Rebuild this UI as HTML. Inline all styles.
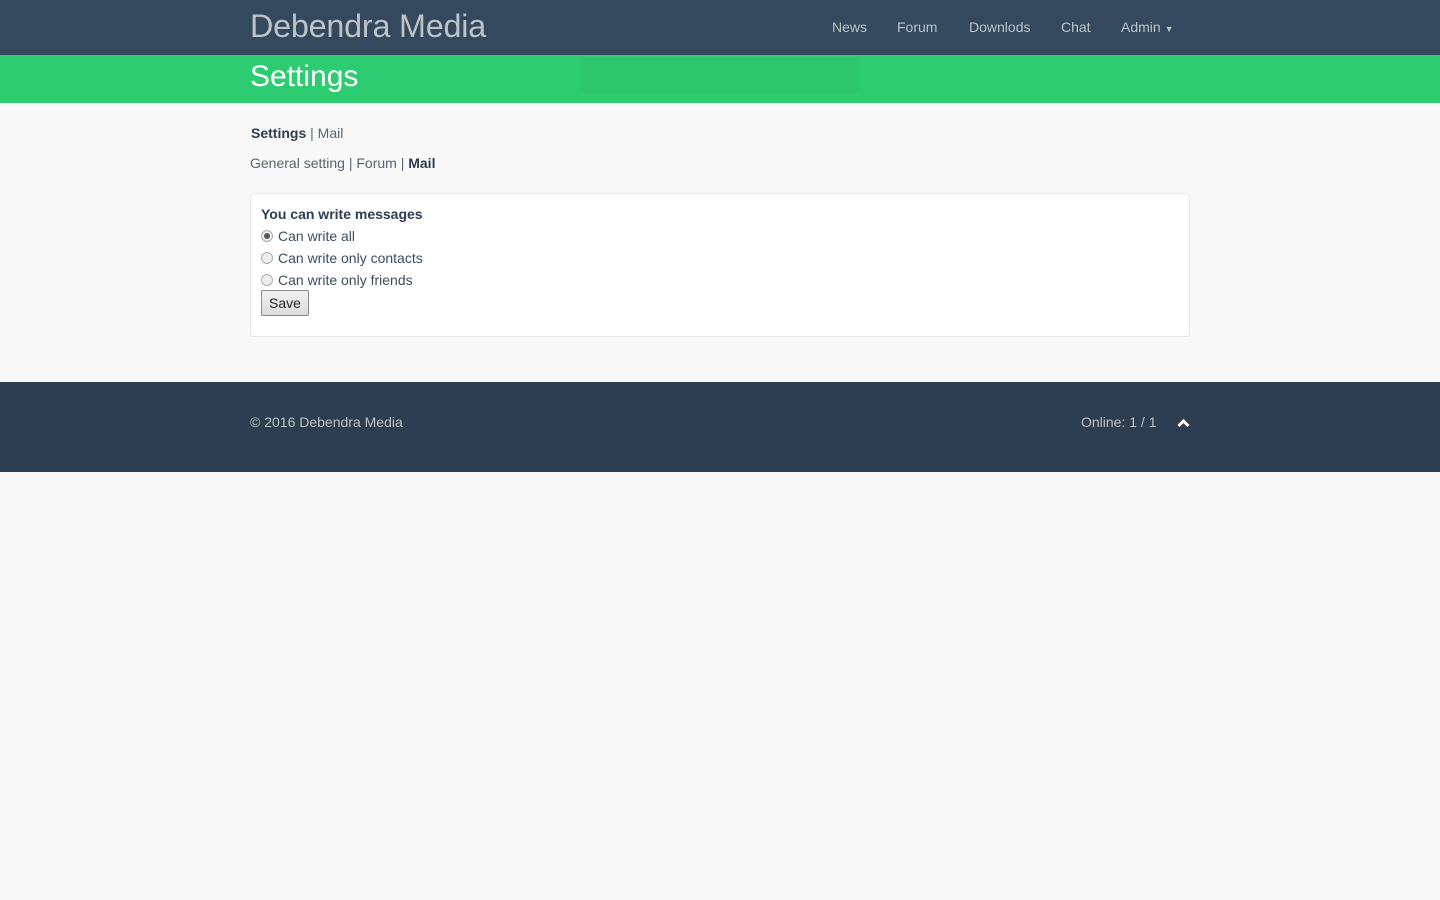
<!DOCTYPE html>
<html><head><style>
*{margin:0;padding:0;box-sizing:border-box}
body{width:1440px;height:900px;background:#f8f8f8;font-family:"Liberation Sans",Arial,sans-serif;color:#2c3e50;font-size:14px;position:relative;overflow:hidden}
.nav{position:absolute;top:0;left:0;width:1440px;height:55px;background:#34495e}
.brand{position:absolute;left:250px;top:8px;font-size:32.3px;color:#bdc3c7;letter-spacing:-0.2px}
.nav a{position:absolute;top:19px;font-size:14px;color:#bdc3c7}
.green{position:absolute;top:55px;left:0;width:1440px;height:48px;background:#2ecc71}
.green h1{position:absolute;left:250px;top:5px;font-size:30px;font-weight:normal;color:#fff}
.ghost{position:absolute;left:580px;top:57px;width:280px;height:36px;background:#2dc86e}
.t{position:absolute;left:250px;font-size:14px}
.t span{color:#566573}
.box{position:absolute;left:250px;top:193px;width:940px;height:144px;background:#fff;border:1px solid #e8e8e8;border-radius:4px}
.r{position:absolute;left:10px;font-size:14px;color:#3c4d5e}
.rad{display:inline-block;width:12px;height:12px;border:1px solid #aaa;border-radius:50%;background:#eee;vertical-align:-1px;margin-right:5px;position:relative}
.rad.on::after{content:"";position:absolute;left:2px;top:2px;width:6px;height:6px;border-radius:50%;background:#555}
.btn{position:absolute;left:10px;top:96px;width:48px;height:26px;border:1px solid #8a8a8a;border-radius:2px;background:linear-gradient(#f2f2f2,#dcdcdc);font-size:14px;text-align:center;line-height:24px;color:#222}
.foot{position:absolute;top:382px;left:0;width:1440px;height:90px;background:#2c3e50;color:#bdc3c7;font-size:14px}
</style></head><body>
<div class="nav">
<div class="brand">Debendra Media</div>
<a style="left:832px">News</a><a style="left:897px">Forum</a><a style="left:969px">Downlods</a><a style="left:1061px">Chat</a><a style="left:1121px">Admin <span style="font-size:9px">▼</span></a>
</div>
<div class="green"><h1>Settings</h1></div>
<div class="ghost"></div>
<div class="t" style="top:125px;left:251px"><b>Settings</b> <span>| Mail</span></div>
<div class="t" style="top:155px"><span>General setting | Forum |</span> <b>Mail</b></div>
<div class="box">
<div class="r" style="top:12px;font-weight:bold;color:#2c3e50">You can write messages</div>
<div class="r" style="top:34px"><span class="rad on"></span>Can write all</div>
<div class="r" style="top:56px"><span class="rad"></span>Can write only contacts</div>
<div class="r" style="top:78px"><span class="rad"></span>Can write only friends</div>
<div class="btn">Save</div>
</div>
<div class="foot">
<div style="position:absolute;left:250px;top:32px">© 2016 Debendra Media</div>
<div style="position:absolute;left:1081px;top:32px">Online: 1 / 1</div>
<svg style="position:absolute;left:1177px;top:36px" width="13" height="10" viewBox="0 0 13 10"><path d="M1.5 8 L6.5 3 L11.5 8" stroke="#fff" stroke-width="3" fill="none"/></svg>
</div>
</body></html>
